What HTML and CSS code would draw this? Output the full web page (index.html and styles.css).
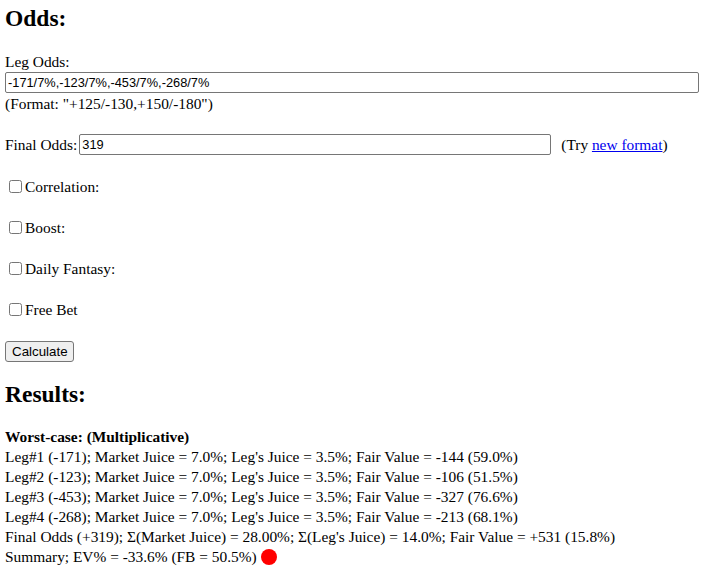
FILE: index.html
```html
<!DOCTYPE html>
<html>
<head>
<meta charset="utf-8">
<link rel="stylesheet" href="styles.css">
</head>
<body>
<div class="page">
  <h2 class="title">Odds:</h2>
  <div class="field-label">Leg Odds:</div>
  <input class="text-input leg-input" type="text" value="-171/7%,-123/7%,-453/7%,-268/7%">
  <div class="hint">(Format: "+125/-130,+150/-180")</div>
  <div class="final-row">
    <span>Final Odds:</span>
    <input class="text-input final-input" type="text" value="319">
    <span class="try">(Try <a href="#">new format</a>)</span>
  </div>
  <label class="check-row first-check"><input class="check" type="checkbox">Correlation:</label>
  <label class="check-row"><input class="check" type="checkbox">Boost:</label>
  <label class="check-row"><input class="check" type="checkbox">Daily Fantasy:</label>
  <label class="check-row"><input class="check" type="checkbox">Free Bet</label>
  <button class="calc-btn" type="button">Calculate</button>
  <h2 class="title results-title">Results:</h2>
  <div class="results">
    <div class="res-line"><b>Worst-case: (Multiplicative)</b></div>
    <div class="res-line">Leg#1 (-171); Market Juice = 7.0%; Leg's Juice = 3.5%; Fair Value = -144 (59.0%)</div>
    <div class="res-line">Leg#2 (-123); Market Juice = 7.0%; Leg's Juice = 3.5%; Fair Value = -106 (51.5%)</div>
    <div class="res-line">Leg#3 (-453); Market Juice = 7.0%; Leg's Juice = 3.5%; Fair Value = -327 (76.6%)</div>
    <div class="res-line">Leg#4 (-268); Market Juice = 7.0%; Leg's Juice = 3.5%; Fair Value = -213 (68.1%)</div>
    <div class="res-line">Final Odds (+319); Σ(Market Juice) = 28.00%; Σ(Leg's Juice) = 14.0%; Fair Value = +531 (15.8%)</div>
    <div class="res-line summary">Summary; EV% = -33.6% (FB = 50.5%) <span class="dot"></span></div>
  </div>
</div>
</body>
</html>
```

FILE: styles.css
```css
html, body {
  margin: 0;
  padding: 0;
  background: #ffffff;
}
body {
  font-family: "Liberation Serif", "Times New Roman", serif;
  font-size: 15.4px;
  line-height: 20px;
  color: #000000;
}
.page {
  padding: 4px 0 0 5px;
  display: flex;
  flex-direction: column;
  align-items: flex-start;
}
.title {
  font-size: 23.5px;
  font-weight: bold;
  line-height: 28px;
  margin: 0;
}
.field-label {
  margin-top: 20px;
  height: 20px;
}
.text-input {
  box-sizing: border-box;
  height: 21px;
  border: 1px solid #767676;
  border-radius: 2px;
  padding: 1px 2px;
  font-family: "Liberation Sans", Arial, sans-serif;
  font-size: 12.8px;
  color: #000;
  background: #fff;
  margin: 0;
}
.leg-input {
  margin-top: 0;
  width: 694px;
}
.hint {
  margin-top: 1px;
  height: 20px;
}
.final-row {
  margin-top: 20px;
  height: 21px;
  display: flex;
  align-items: center;
}
.final-input {
  width: 472px;
  margin-left: 2px;
}
.try {
  margin-left: 10px;
}
.try a {
  color: #0000ee;
  text-decoration: underline;
}
.check-row {
  margin-top: 20px;
  height: 21px;
  display: flex;
  align-items: center;
}
.first-check {
  margin-top: 21px;
}
.check {
  width: 13px;
  height: 13px;
  margin: 0 3px 0 4px;
}
.calc-btn {
  margin-top: 21px;
  box-sizing: border-box;
  width: 69px;
  height: 21px;
  padding: 1px 6px;
  font-family: "Liberation Sans", Arial, sans-serif;
  font-size: 13.33px;
  color: #000;
  background: #efefef;
  border: 1px solid #767676;
  border-radius: 3px;
}
.results-title {
  margin-top: 18px;
}
.results {
  margin-top: 19px;
}
.res-line {
  height: 20px;
  white-space: nowrap;
}
.summary {
  display: flex;
  align-items: center;
}
.dot {
  display: inline-block;
  width: 16px;
  height: 16px;
  border-radius: 50%;
  background: #ff0000;
  margin-left: 4px;
}
```
